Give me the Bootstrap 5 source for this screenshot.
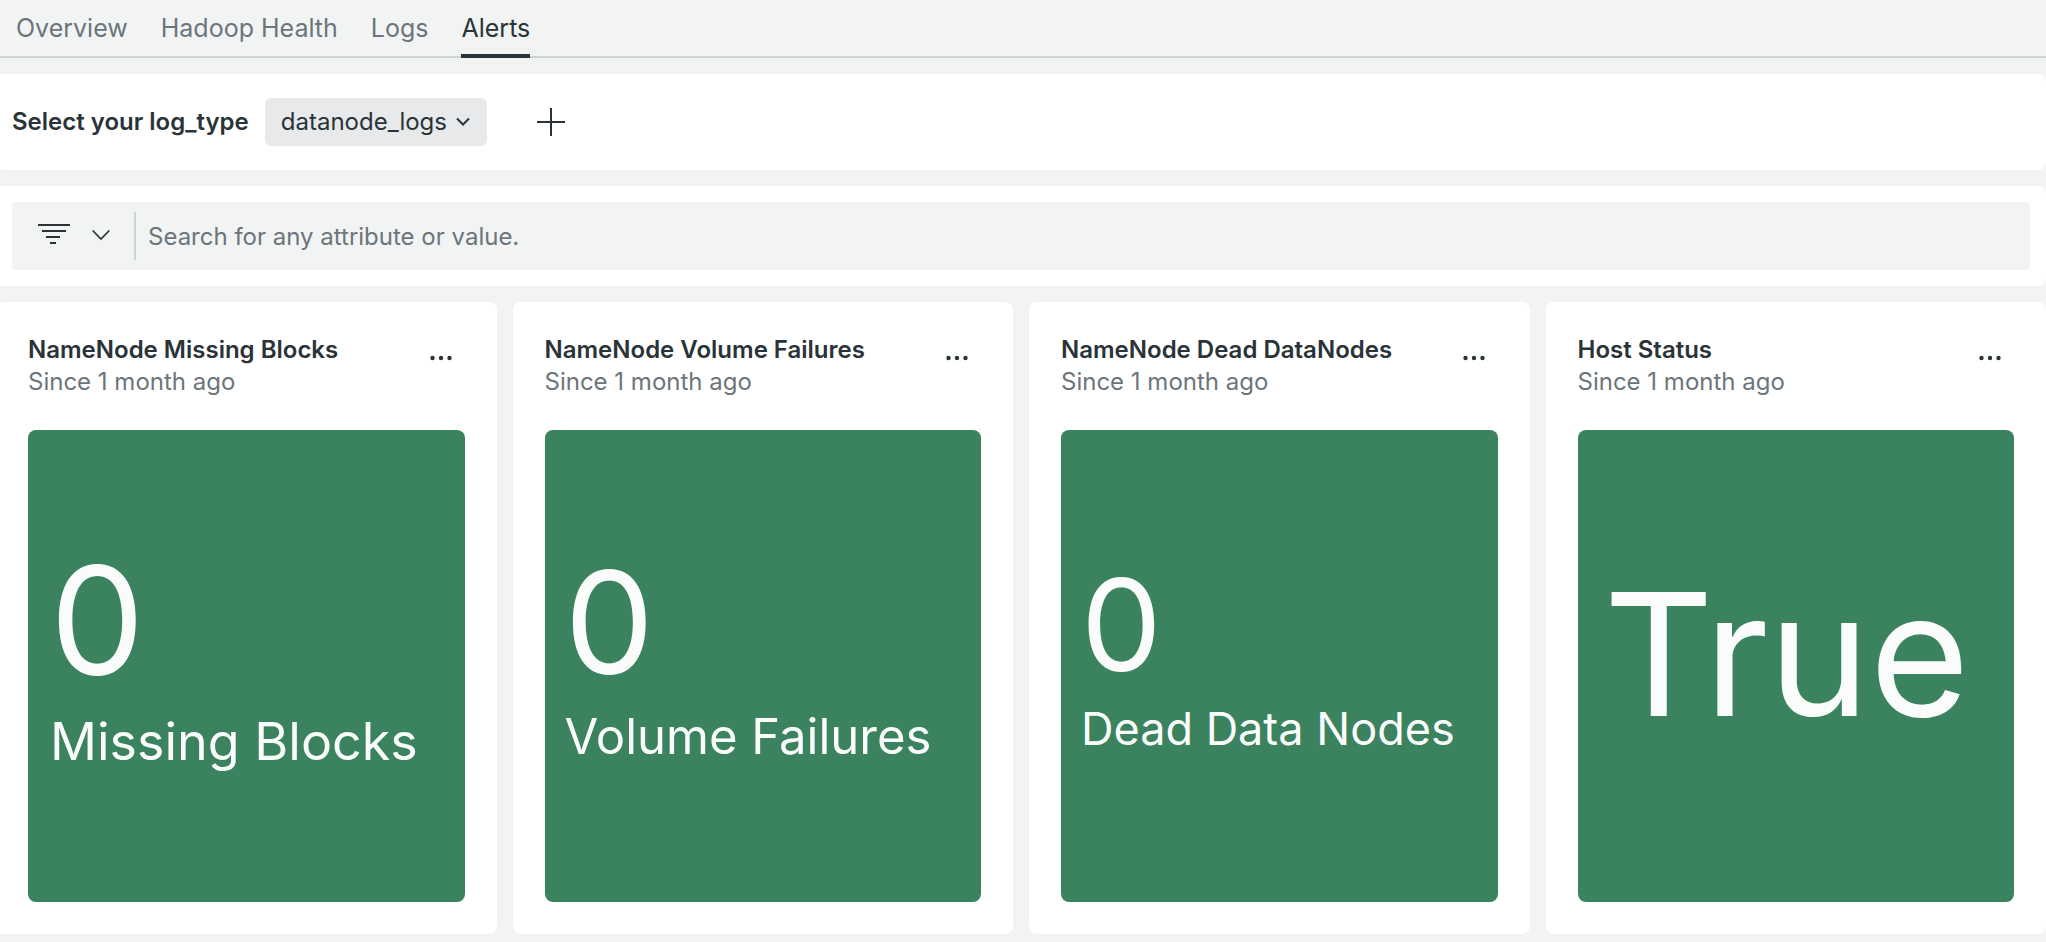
<!DOCTYPE html>
<html lang="en">
<head>
<meta charset="utf-8">
<meta name="viewport" content="width=device-width, initial-scale=1">
<title>Hadoop Alerts</title>
<link href="https://cdn.jsdelivr.net/npm/bootstrap@5.3.0/dist/css/bootstrap.min.css" rel="stylesheet">
<style>
  :root { --ink: #293338; --muted: #6b757b; --canvas: #f2f4f4; --rule: #ccd4d7; --ok: #3b835e; }
  body { background: var(--canvas); color: var(--ink); font-family: Inter, "Liberation Sans", sans-serif; font-size: 24px; line-height: 32px; overflow-x: hidden; }
  .tabs { border-bottom: 2px solid var(--rule); padding: 12px 16px 0; gap: 33px; font-size: 25px; }
  .tabs .nav-link { color: var(--muted); padding: 0 0 10px; border-bottom: 4px solid transparent; margin-bottom: -2px; }
  .tabs .nav-link.active { color: var(--ink); border-color: var(--ink); }
  .board { margin-left: -4px; gap: 16px; padding: 16px 0 8px; }
  .panel { background: #fff; border-radius: 8px; padding: 24px 16px; }
  .panel-search { padding: 16px; }
  .log-select { width: 222px; height: 48px; padding: 0 36px 0 16px; border: 0; border-radius: 6px; color: var(--ink); font-size: 24px; line-height: 32px;
    background: #e7e9ea url("data:image/svg+xml,%3Csvg xmlns='http://www.w3.org/2000/svg' viewBox='0 0 14 10'%3E%3Cpath d='M1 1.5l6 6 6-6' fill='none' stroke='%23293338' stroke-width='2'/%3E%3C/svg%3E") no-repeat right 17px center / 14px 10px; }
  .icon-btn { width: 48px; height: 48px; color: var(--ink); }
  .searchbar { background: var(--canvas); border-radius: 4px; padding: 10px 12px 10px 26px; }
  .filter-btn { gap: 22px; color: var(--ink); }
  .searchbar input { border: 0; border-left: 2px solid var(--rule); height: 48px; padding: 0 12px; background: transparent; color: var(--ink); outline: 0; min-width: 0; }
  .searchbar input::placeholder { color: var(--muted); opacity: 1; }
  .tiles { display: grid; grid-template-columns: repeat(4, minmax(0, 1fr)); gap: 16px; }
  .widget { background: #fff; border-radius: 8px; padding: 32px; }
  .widget h2 { font-size: 24px; line-height: 32px; font-weight: 600; margin: 0; }
  .since { color: var(--muted); }
  .billboard { background: var(--ok); color: #fafcfb; border-radius: 8px; height: 472px; margin-top: 32px; padding: 0 22px 28px; line-height: 1.2; }
  .size-a .value { font-size: 150px; } .size-a .caption { font-size: 52px; }
  .size-b .value { font-size: 142px; } .size-b .caption { font-size: 49px; }
  .size-c .value { font-size: 128px; } .size-c .caption { font-size: 45px; }
  .size-b, .size-c { padding-left: 20px; }
  .size-d .value { font-size: 171px; }
  .size-d { padding-left: 26px; padding-bottom: 24px; }
</style>
</head>
<body>
<nav class="nav tabs" aria-label="Dashboard pages">
  <a class="nav-link" href="#">Overview</a>
  <a class="nav-link" href="#">Hadoop Health</a>
  <a class="nav-link" href="#">Logs</a>
  <a class="nav-link active" href="#" aria-current="page">Alerts</a>
</nav>
<main class="board d-flex flex-column">
  <section class="panel d-flex align-items-center">
    <label class="fw-semibold me-3" for="logType">Select your log_type</label>
    <select class="log-select form-select" id="logType"><option>datanode_logs</option></select>
    <button class="btn icon-btn border-0 p-0 ms-5 d-flex align-items-center" type="button" aria-label="Add variable">
      <svg width="32" height="32" viewBox="0 0 32 32" stroke="currentColor" stroke-width="2"><path d="M2 16h28M16 2v28"/></svg>
    </button>
  </section>
  <section class="panel panel-search">
    <form class="searchbar d-flex align-items-center">
      <button class="filter-btn btn border-0 p-0 pe-4 d-flex align-items-center" type="button" aria-label="Filters">
        <svg width="32" height="24" viewBox="0 0 32 24" stroke="currentColor" stroke-width="2"><path d="M0 1h32M4 7h24M8 13h14M12 19h6"/></svg>
        <svg width="18" height="14" viewBox="0 0 18 14" fill="none" stroke="currentColor" stroke-width="1.7"><path d="M.7 1.5l8.300 8.500 8.300-8.500"/></svg>
      </button>
      <input class="flex-grow-1" type="search" aria-label="Search" placeholder="Search for any attribute or value.">
    </form>
  </section>
  <div class="tiles">
    <article class="widget">
      <header class="d-flex justify-content-between">
        <div><h2>NameNode Missing Blocks</h2><div class="since">Since 1 month ago</div></div>
        <button class="btn icon-btn border-0 p-0 flex-shrink-0" type="button" aria-label="Widget menu"><svg class="d-block mx-auto" width="22" height="6" fill="currentColor"><circle cx="2.500" cy="3" r="2.200"/><circle cx="11" cy="3" r="2.200"/><circle cx="19.500" cy="3" r="2.200"/></svg></button>
      </header>
      <div class="billboard size-a d-flex flex-column justify-content-center"><div class="value">0</div><div class="caption">Missing Blocks</div></div>
    </article>
    <article class="widget">
      <header class="d-flex justify-content-between">
        <div><h2>NameNode Volume Failures</h2><div class="since">Since 1 month ago</div></div>
        <button class="btn icon-btn border-0 p-0 flex-shrink-0" type="button" aria-label="Widget menu"><svg class="d-block mx-auto" width="22" height="6" fill="currentColor"><circle cx="2.500" cy="3" r="2.200"/><circle cx="11" cy="3" r="2.200"/><circle cx="19.500" cy="3" r="2.200"/></svg></button>
      </header>
      <div class="billboard size-b d-flex flex-column justify-content-center"><div class="value">0</div><div class="caption">Volume Failures</div></div>
    </article>
    <article class="widget">
      <header class="d-flex justify-content-between">
        <div><h2>NameNode Dead DataNodes</h2><div class="since">Since 1 month ago</div></div>
        <button class="btn icon-btn border-0 p-0 flex-shrink-0" type="button" aria-label="Widget menu"><svg class="d-block mx-auto" width="22" height="6" fill="currentColor"><circle cx="2.500" cy="3" r="2.200"/><circle cx="11" cy="3" r="2.200"/><circle cx="19.500" cy="3" r="2.200"/></svg></button>
      </header>
      <div class="billboard size-c d-flex flex-column justify-content-center"><div class="value">0</div><div class="caption">Dead Data Nodes</div></div>
    </article>
    <article class="widget">
      <header class="d-flex justify-content-between">
        <div><h2>Host Status</h2><div class="since">Since 1 month ago</div></div>
        <button class="btn icon-btn border-0 p-0 flex-shrink-0" type="button" aria-label="Widget menu"><svg class="d-block mx-auto" width="22" height="6" fill="currentColor"><circle cx="2.500" cy="3" r="2.200"/><circle cx="11" cy="3" r="2.200"/><circle cx="19.500" cy="3" r="2.200"/></svg></button>
      </header>
      <div class="billboard size-d d-flex flex-column justify-content-center"><div class="value">True</div></div>
    </article>
  </div>
</main>
<script src="https://cdn.jsdelivr.net/npm/bootstrap@5.3.0/dist/js/bootstrap.bundle.min.js"></script>
</body>
</html>
